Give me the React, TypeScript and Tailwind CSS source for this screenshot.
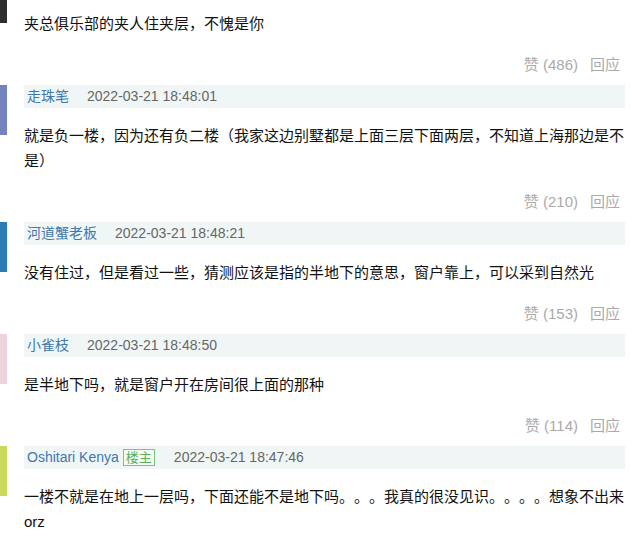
import React from "react";

type Comment = {
  name?: string;
  op?: boolean;
  time?: string;
  text: string;
  likes: number;
  avatar: string;
};

const comments: Comment[] = [
  {
    text: "夹总俱乐部的夹人住夹层，不愧是你",
    likes: 486,
    avatar: "bg-[#2e2e2e]",
  },
  {
    name: "走珠笔",
    time: "2022-03-21 18:48:01",
    text: "就是负一楼，因为还有负二楼（我家这边别墅都是上面三层下面两层，不知道上海那边是不是）",
    likes: 210,
    avatar: "bg-[#7482bd]",
  },
  {
    name: "河道蟹老板",
    time: "2022-03-21 18:48:21",
    text: "没有住过，但是看过一些，猜测应该是指的半地下的意思，窗户靠上，可以采到自然光",
    likes: 153,
    avatar: "bg-[#2b7cb5]",
  },
  {
    name: "小雀枝",
    time: "2022-03-21 18:48:50",
    text: "是半地下吗，就是窗户开在房间很上面的那种",
    likes: 114,
    avatar: "bg-[#ecd3de]",
  },
  {
    name: "Oshitari Kenya",
    op: true,
    time: "2022-03-21 18:47:46",
    text: "一楼不就是在地上一层吗，下面还能不是地下吗。。。我真的很没见识。。。。想象不出来orz",
    likes: 0,
    avatar: "bg-[#c9da5a]",
  },
];

const font = "font-['Liberation_Sans','Noto_Sans_CJK_SC',sans-serif]";

const CommentItem = ({ c, first, last }: { c: Comment; first: boolean; last: boolean }) => (
  <div className={`flex ${first ? "-mt-[27px]" : "mt-[11px]"}`}>
    <div className={`w-[48px] h-[50px] shrink-0 -ml-[41px] ${c.avatar}`} />
    <div className="w-[601px] ml-[17px]">
      <div className="h-[23px] bg-[#f0f6f5] flex items-center pl-[3px] text-[14px] leading-[23px]">
        {c.name && <span className="text-[#3f78ad]">{c.name}</span>}
        {c.op && (
          <span className="ml-[4px] px-[2px] h-[17px] leading-[15px] border border-[#7cc47c] text-[#5fae5f] bg-[#f4fbf2] text-[13px]">
            楼主
          </span>
        )}
        {c.time && (
          <span className={`text-[#666] ${c.op ? "ml-[19px]" : "ml-[18px]"}`}>{c.time}</span>
        )}
      </div>
      <p className="mt-[15px] w-[600px] text-[15px] leading-[25px] text-[#111] break-all [text-spacing-trim:space-all]">
        {c.text}
      </p>
      {!last && (
        <div className="mt-[20px] h-[18px] leading-[18px] text-[15px] text-[#aaa] flex justify-end pr-[5px]">
          <span>赞 ({c.likes})</span>
          <span className="ml-[12px]">回应</span>
        </div>
      )}
    </div>
  </div>
);

export default function App() {
  return (
    <div className={`w-[640px] h-[543px] overflow-hidden bg-white ${font}`}>
      {comments.map((c, i) => (
        <CommentItem key={i} c={c} first={i === 0} last={i === comments.length - 1} />
      ))}
    </div>
  );
}
